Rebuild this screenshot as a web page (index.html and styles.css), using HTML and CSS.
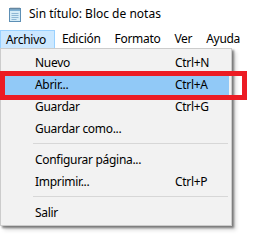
FILE: index.html
```html
<!DOCTYPE html>
<html>
<head>
<meta charset="utf-8">
<link rel="stylesheet" href="styles.css">
</head>
<body>
<div class="window">
  <div class="titlebar">
    <svg class="app-icon" width="16" height="16" viewBox="0 0 16 16">
      <rect x="2.5" y="2.5" width="11" height="13" fill="#d6ecf7" stroke="#5d8fb5"/>
      <rect x="3" y="3" width="10" height="2" fill="#7fb2d6"/>
      <line x1="4.5" y1="7.5" x2="11.5" y2="7.5" stroke="#8fb7d4"/>
      <line x1="4.5" y1="9.5" x2="11.5" y2="9.5" stroke="#8fb7d4"/>
      <line x1="4.5" y1="11.5" x2="11.5" y2="11.5" stroke="#8fb7d4"/>
      <line x1="4.5" y1="13.5" x2="9.5" y2="13.5" stroke="#8fb7d4"/>
      <path d="M4 1.5v2M6 1.5v2M8 1.5v2M10 1.5v2M12 1.5v2" stroke="#6f7f8c"/>
    </svg>
    <span class="title">Sin título: Bloc de notas</span>
  </div>
  <div class="menubar">
    <span class="mitem open">Archivo</span>
    <span class="mitem">Edición</span>
    <span class="mitem">Formato</span>
    <span class="mitem">Ver</span>
    <span class="mitem">Ayuda</span>
  </div>
  <div class="dropdown">
    <div class="row"><span class="label">Nuevo</span><span class="key">Ctrl+N</span></div>
    <div class="row hot"><span class="label">Abrir...</span><span class="key">Ctrl+A</span></div>
    <div class="row"><span class="label">Guardar</span><span class="key">Ctrl+G</span></div>
    <div class="row"><span class="label">Guardar como...</span><span class="key"></span></div>
    <div class="sep"></div>
    <div class="row"><span class="label">Configurar página...</span><span class="key"></span></div>
    <div class="row"><span class="label">Imprimir...</span><span class="key">Ctrl+P</span></div>
    <div class="sep"></div>
    <div class="row"><span class="label">Salir</span><span class="key"></span></div>
  </div>
  <div class="redbox"></div>
</div>
</body>
</html>
```
FILE: styles.css
```css
html, body {
  margin: 0;
  padding: 0;
  background: #ffffff;
}
.window {
  position: relative;
  width: 269px;
  height: 244px;
  overflow: hidden;
  font-family: "Noto Sans", "Open Sans", sans-serif;
  font-size: 12px;
  color: #000;
}
.titlebar {
  height: 30px;
  display: flex;
  align-items: center;
  padding-left: 7px;
  padding-bottom: 2px;
  box-sizing: border-box;
}
.app-icon {
  display: block;
  margin-right: 6px;
}
.title {
  font-size: 12px;
  line-height: 16px;
}
.menubar {
  height: 18px;
  display: flex;
  align-items: stretch;
  letter-spacing: -0.3px;
}
.mitem {
  display: flex;
  align-items: center;
  padding: 0 6px;
  line-height: 16px;
  box-sizing: border-box;
  border: 1px solid transparent;
}
.mitem.open {
  background: #cce8ff;
  border-color: #99d1ff;
  border-bottom: none;
  padding-left: 5px;
  padding-right: 8px;
}
.dropdown {
  width: 232px;
  box-sizing: border-box;
  background: #f2f2f2;
  border: 1px solid #cccccc;
  padding: 2px;
  letter-spacing: -0.3px;
  box-shadow: 2px 2px 2px rgba(0,0,0,0.45), 4px 4px 4px rgba(0,0,0,0.15);
}
.row {
  height: 22px;
  display: flex;
  align-items: center;
  padding-left: 32px;
}
.row.hot {
  background: #91c9f7;
}
.label {
  flex: 1;
}
.key {
  width: 54px;
}
.sep {
  height: 9px;
  display: flex;
  align-items: center;
  margin: 0 1px 0 30px;
}
.sep::before {
  content: "";
  display: block;
  width: 100%;
  height: 1px;
  background: #d7d7d7;
}
.redbox {
  position: absolute;
  left: 0;
  top: 71px;
  width: 247px;
  height: 29px;
  box-sizing: border-box;
  border: 5px solid #ec1c24;
}
```
